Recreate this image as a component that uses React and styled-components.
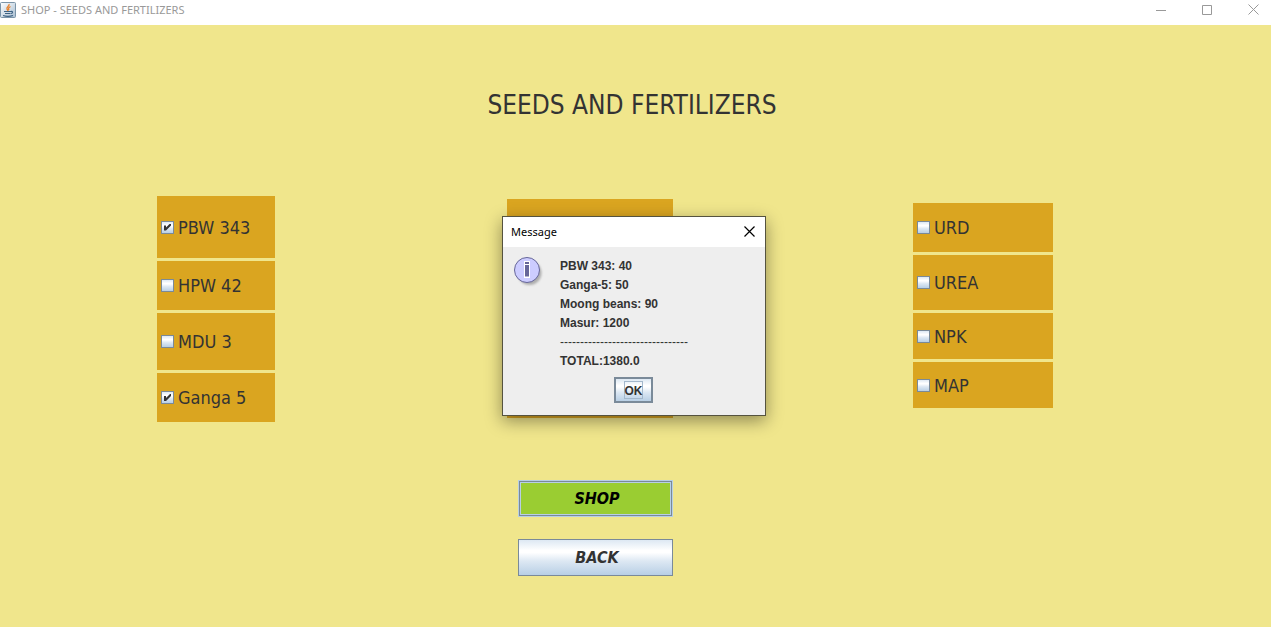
import React from "react";
import styled, { createGlobalStyle, css } from "styled-components";

const Global = createGlobalStyle`
  *, *::before, *::after { box-sizing: border-box; }
  html, body { margin: 0; background: #f0e68c; }
  button { cursor: pointer; }
`;

const uiFont = css`font-family: "Noto Sans", "Open Sans", sans-serif;`;
const formFont = css`font-family: "DejaVu Sans Condensed", "Noto Sans", sans-serif;`;
const metal = css`background: linear-gradient(#dde8f3 0%, #ffffff 30%, #ffffff 36%, #dde8f3 60%, #b8cfe5 100%);`;

const Window = styled.div`
  position: relative;
  min-height: 100vh;
  display: flex;
  flex-direction: column;
  color: #333333;
`;

const TitleBar = styled.header`
  ${uiFont}
  display: flex;
  align-items: center;
  gap: 10px;
  height: 25px;
  padding-bottom: 6px;
  background: #ffffff;
  color: #999999;
  font-size: 11px;
`;

const WindowTitle = styled.span`
  flex: 1;
  display: flex;
  align-items: center;
  gap: 5px;
`;

const WindowButton = styled.button`
  display: flex;
  align-items: center;
  justify-content: center;
  width: ${(p) => p.$width || 36}px;
  height: 19px;
  padding: 0;
  border: 0;
  background: transparent;
  color: ${(p) => p.$color || "#999999"};
`;

const Heading = styled.h1`
  ${formFont}
  margin: 0;
  padding: 64px 7px 0 0;
  font-size: 26px;
  line-height: 32px;
  font-weight: 400;
  text-align: center;
`;

const Shop = styled.form`
  display: grid;
  grid-template-columns: 157fr 118px 232fr 166px 240fr 140px 218fr;
  align-items: start;
  padding-top: 75px;
`;

const Column = styled.div`
  grid-column: ${(p) => p.$column};
  display: flex;
  flex-direction: column;
  gap: 3px;
  padding-top: ${(p) => p.$drop || 0}px;
`;

const Item = styled.label`
  ${formFont}
  display: flex;
  align-items: center;
  gap: 4px;
  height: ${(p) => p.$height}px;
  padding-left: 4px;
  background: #daa520;
  font-size: 18px;
  line-height: 23px;
`;

const CoveredItems = styled.div`
  height: 219px;
  background: #daa520;
`;

const Box = styled.input`
  ${metal}
  appearance: none;
  display: grid;
  place-items: center;
  flex: none;
  width: 13px;
  height: 13px;
  margin: 0;
  border: 1px solid #7a8a99;
  &:checked::before {
    content: "";
    width: 7px;
    height: 7px;
    background: #333333;
    clip-path: polygon(0 2px, 2px 2px, 2px 4px, 6px 0, 7px 0, 7px 2px, 2px 7px, 0 7px);
  }
`;

const Actions = styled.div`
  grid-column: 4;
  justify-self: end;
  display: flex;
  flex-direction: column;
  gap: 22px;
  width: 155px;
  padding-top: 58px;
`;

const ActionButton = styled.button`
  ${formFont}
  height: 37px;
  padding: 0 0 1px 3px;
  font-size: 16px;
  font-weight: 700;
  font-style: italic;
  ${(p) =>
    p.$primary
      ? css`
          color: #000000;
          background: #9acd32;
          border: 1px solid #b8cfe5;
          box-shadow: inset 0 0 0 1px #7a8a99, inset 0 0 0 2px #b8cfe5;
        `
      : css`
          ${metal}
          color: #333333;
          border: 1px solid #7a8a99;
        `}
`;

const Overlay = styled.div`
  position: absolute;
  inset: 0;
  display: flex;
  align-items: center;
  justify-content: center;
  padding: 5px 3px 0 0;
`;

const Dialog = styled.section`
  width: 264px;
  border: 1px solid #55533f;
  background: #eeeeee;
  box-shadow: 0 5px 16px rgba(0, 0, 0, 0.4);
`;

const DialogBar = styled.header`
  ${uiFont}
  display: flex;
  align-items: center;
  justify-content: space-between;
  height: 30px;
  padding: 0 0 2px 8px;
  background: #ffffff;
  color: #000000;
  font-size: 11px;
`;

const DialogBody = styled.div`
  display: flex;
  gap: 16px;
  padding: 9px 10px 0;
`;

const Receipt = styled.div`
  padding-top: 1px;
  font-family: "Liberation Sans", Arial, sans-serif;
  font-size: 12px;
  line-height: 19px;
  font-weight: 700;
`;

const Line = styled.p`
  margin: 0;
  font-weight: ${(p) => (p.$rule ? 400 : 700)};
`;

const DialogFooter = styled.footer`
  display: flex;
  justify-content: center;
  padding: 6px 2px 12px 0;
`;

const OkButton = styled.button`
  ${metal}
  width: 39px;
  height: 26px;
  padding: 0;
  border: 2px solid #7a8a99;
  color: #333333;
  font: 700 12px/14px "Liberation Sans", Arial, sans-serif;
  span {
    display: block;
    width: 19px;
    margin: 0 auto;
    padding-top: 2px;
    border: 1px solid #a3b8cc;
    white-space: nowrap;
  }
`;

const JavaIcon = () => (
  <svg width="16" height="18" viewBox="0 0 16 18" aria-hidden="true">
    <defs>
      <linearGradient id="java" x1="0" y1="0" x2="1" y2="1">
        <stop offset="0" stopColor="#ffffff" />
        <stop offset="1" stopColor="#a9bfd2" />
      </linearGradient>
    </defs>
    <rect x="0.5" y="1.500" width="15" height="15" rx="1" fill="url(#java)" stroke="#7b94a8" />
    <path d="M9 3c1 2-3 3-2 5 .3.800 1 1 1 2M10.500 5.500c-2 1-2.500 2-1.500 3.500" fill="none" stroke="#e8812c" strokeWidth="1.300" />
    <path d="M4 10.500h7M5 12.500h5.500M3 14.500c3 1 7 1 10 0M11 10.500c2-.500 2 1.500 0 2" fill="none" stroke="#3f6384" strokeWidth="1.200" />
  </svg>
);

const CloseIcon = ({ width = 1 }) => (
  <svg width="11" height="11" viewBox="0 0 11 11" aria-hidden="true">
    <path d="M.5.5l10 10M10.500.5l-10 10" stroke="currentColor" strokeWidth={width} />
  </svg>
);

const InfoIcon = () => (
  <svg width="31" height="32" viewBox="0 0 31 32" aria-hidden="true">
    <defs>
      <filter id="soft" x="-30%" y="-30%" width="160%" height="160%">
        <feGaussianBlur stdDeviation="1.300" />
      </filter>
    </defs>
    <circle cx="16.500" cy="17" r="12" fill="#999999" opacity="0.75" filter="url(#soft)" />
    <circle cx="14" cy="14" r="12.500" fill="#ccccff" stroke="#666699" />
    <path d="M11 5h6v4h-6zM11 8h6v14h-6z" fill="#ffffff" />
    <path d="M12 6h4v2h-4zM12 9h4v11.500h-4z" fill="#666699" />
  </svg>
);

const cereals = [
  { name: "PBW 343", height: 62, checked: true },
  { name: "HPW 42", height: 49 },
  { name: "MDU 3", height: 57 },
  { name: "Ganga 5", height: 49, checked: true },
];

const fertilizers = [
  { name: "URD", height: 49 },
  { name: "UREA", height: 55 },
  { name: "NPK", height: 46 },
  { name: "MAP", height: 46 },
];

const receipt = ["PBW 343: 40", "Ganga-5: 50", "Moong beans: 90", "Masur: 1200"];

const Items = ({ items }) =>
  items.map((item) => (
    <Item key={item.name} $height={item.height}>
      <Box type="checkbox" defaultChecked={item.checked} />
      {item.name}
    </Item>
  ));

export default function App() {
  return (
    <Window>
      <Global />
      <TitleBar>
        <WindowTitle>
          <JavaIcon />
          SHOP - SEEDS AND FERTILIZERS
        </WindowTitle>
        <WindowButton aria-label="Minimize">
          <svg width="10" height="10" viewBox="0 0 10 10"><path d="M0 5.500h10" stroke="currentColor" /></svg>
        </WindowButton>
        <WindowButton aria-label="Maximize">
          <svg width="10" height="10" viewBox="0 0 10 10"><path d="M.5.5h9v9h-9z" fill="none" stroke="currentColor" /></svg>
        </WindowButton>
        <WindowButton aria-label="Close">
          <CloseIcon />
        </WindowButton>
      </TitleBar>
      <Heading>SEEDS AND FERTILIZERS</Heading>
      <Shop onSubmit={(e) => e.preventDefault()}>
        <Column $column={2}>
          <Items items={cereals} />
        </Column>
        <Column $column={4} $drop={3}>
          <CoveredItems />
        </Column>
        <Column $column={6} $drop={7}>
          <Items items={fertilizers} />
        </Column>
        <Actions>
          <ActionButton type="submit" $primary>SHOP</ActionButton>
          <ActionButton type="button">BACK</ActionButton>
        </Actions>
      </Shop>
      <Overlay>
        <Dialog role="dialog" aria-labelledby="dialog-title">
          <DialogBar>
            <span id="dialog-title">Message</span>
            <WindowButton aria-label="Close message" $width={31} $color="#000000">
              <CloseIcon width={1.2} />
            </WindowButton>
          </DialogBar>
          <DialogBody>
            <InfoIcon />
            <Receipt>
              {receipt.map((line) => (
                <Line key={line}>{line}</Line>
              ))}
              <Line $rule>{"-".repeat(32)}</Line>
              <Line>TOTAL:1380.0</Line>
            </Receipt>
          </DialogBody>
          <DialogFooter>
            <OkButton type="button"><span>OK</span></OkButton>
          </DialogFooter>
        </Dialog>
      </Overlay>
    </Window>
  );
}
